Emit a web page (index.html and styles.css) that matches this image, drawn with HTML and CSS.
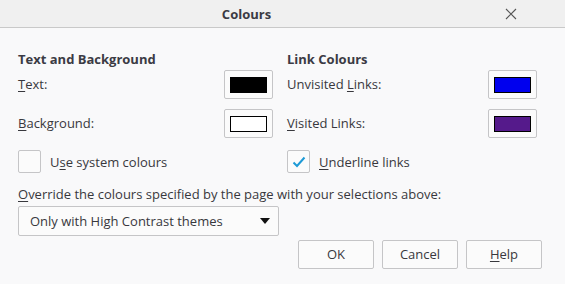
FILE: index.html
```html
<!DOCTYPE html>
<html>
<head>
<meta charset="utf-8">
<link rel="stylesheet" href="styles.css">
</head>
<body>
<div class="dialog">
  <div class="titlebar">
    <div class="title">Colours</div>
    <div class="close">
      <svg width="12" height="12" viewBox="0 0 12 12"><path d="M1 1L11 11M11 1L1 11" stroke="#555" stroke-width="1.1" fill="none"/></svg>
    </div>
  </div>
  <div class="content">
    <div class="cols">
      <div class="col">
        <div class="heading">Text and Background</div>
        <div class="row">
          <span class="label"><u>T</u>ext:</span>
          <button class="swatch"><span class="chip black"></span></button>
        </div>
        <div class="row">
          <span class="label"><u>B</u>ackground:</span>
          <button class="swatch"><span class="chip white"></span></button>
        </div>
        <div class="check-row">
          <span class="box"></span>
          <span class="label">U<u>s</u>e system colours</span>
        </div>
      </div>
      <div class="col">
        <div class="heading">Link Colours</div>
        <div class="row">
          <span class="label">Unvisited <u>L</u>inks:</span>
          <button class="swatch"><span class="chip blue"></span></button>
        </div>
        <div class="row">
          <span class="label"><u>V</u>isited Links:</span>
          <button class="swatch"><span class="chip purple"></span></button>
        </div>
        <div class="check-row">
          <span class="box">
            <svg width="14" height="12" viewBox="0 0 14 12"><path d="M1.5 6.5L5 10L12.5 1.5" stroke="#1d9ad6" stroke-width="2" fill="none"/></svg>
          </span>
          <span class="label"><u>U</u>nderline links</span>
        </div>
      </div>
    </div>
    <div class="override"><u>O</u>verride the colours specified by the page with your selections above:</div>
    <div class="select">
      <span>Only with High Contrast themes</span>
      <svg width="10" height="6" viewBox="0 0 10 6"><path d="M0 0H10L5 6Z" fill="#111"/></svg>
    </div>
    <div class="buttons">
      <button class="btn">OK</button>
      <button class="btn">Cancel</button>
      <button class="btn"><u>H</u>elp</button>
    </div>
  </div>
</div>
</body>
</html>
```

FILE: styles.css
```css
* { box-sizing: border-box; }
html, body { margin: 0; padding: 0; }
body {
  width: 565px;
  height: 284px;
  background: #f9f9fa;
  font-family: "Open Sans", "Noto Sans", sans-serif;
  font-size: 13px;
  color: #38383d;
  overflow: hidden;
}
u { text-decoration-thickness: 1px; text-underline-offset: 2px; }
.titlebar {
  height: 28px;
  background: #f0f0f0;
  border-bottom: 1px solid #c9c9c9;
  display: flex;
  align-items: center;
  justify-content: center;
  position: relative;
}
.title {
  font-weight: 700;
  color: #3b3b44;
  margin-right: 72px;
  font-size: 13px;
}
.close {
  position: absolute;
  right: 48px;
  top: 8px;
  width: 12px;
  height: 12px;
  display: flex;
}
.content {
  padding: 22px 18px 0 18px;
}
.cols {
  display: grid;
  grid-template-columns: 255px 250px;
  column-gap: 14px;
}
.col { display: flex; flex-direction: column; }
.heading {
  font-weight: 700;
  color: #3b3b44;
  height: 20px;
  line-height: 18px;
}
.row {
  display: flex;
  align-items: center;
  justify-content: space-between;
  height: 29px;
  margin-bottom: 10px;
}
.row .label { padding-bottom: 2px; }
.swatch {
  width: 49px;
  height: 29px;
  border: 1px solid #c5c5c7;
  border-radius: 2px;
  background: #fbfbfb;
  padding: 0;
  display: flex;
  align-items: center;
  justify-content: center;
}
.chip {
  width: 37px;
  height: 16px;
  border: 1px solid #000;
  display: block;
}
.black { background: #000; }
.white { background: #fff; }
.blue { background: #0000ee; }
.purple { background: #551a8b; }
.check-row {
  display: flex;
  align-items: center;
  height: 23px;
  margin-top: 2px;
}
.box {
  width: 23px;
  height: 23px;
  border: 1px solid #c5c5c7;
  border-radius: 2px;
  background: #fbfbfb;
  margin-right: 9px;
  display: flex;
  align-items: center;
  justify-content: center;
}
.override {
  margin-top: 11px;
  height: 20px;
  line-height: 20px;
}
.select {
  width: 261px;
  height: 30px;
  margin-top: 2px;
  border: 1px solid #c5c5c7;
  border-radius: 2px;
  background: #fbfbfb;
  display: flex;
  align-items: center;
  justify-content: space-between;
  padding: 0 8px 0 11px;
}
.select span { padding-bottom: 1px; }
.buttons {
  display: flex;
  justify-content: flex-end;
  gap: 8px;
  margin-top: 4px;
  padding-right: 5px;
}
.btn {
  width: 76px;
  height: 29px;
  border: 1px solid #c5c5c7;
  border-radius: 2px;
  background: #fbfbfb;
  font-family: inherit;
  font-size: 13px;
  color: #38383d;
  padding: 0 0 1px 0;
}
```
